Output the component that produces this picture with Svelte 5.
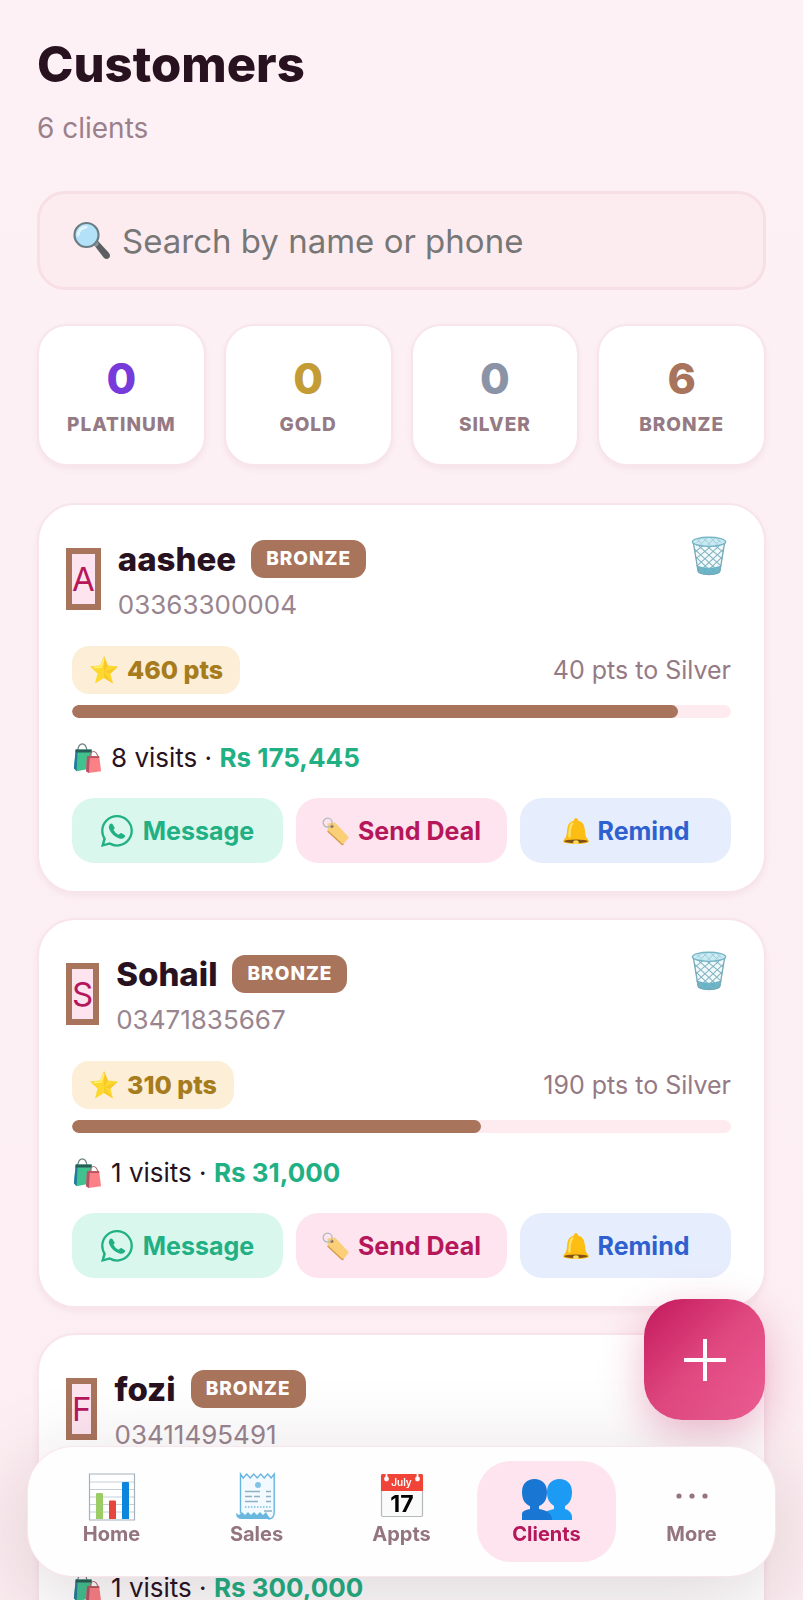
<script>
  const tiers = [
    { name: 'Platinum', count: 0, color: '#773bdc' },
    { name: 'Gold', count: 0, color: '#c39c35' },
    { name: 'Silver', count: 0, color: '#8a94a6' },
    { name: 'Bronze', count: 6, color: '#a9745c' }
  ];

  const goal = 500;
  const customers = [
    { name: 'aashee', phone: '03363300004', points: 460, visits: 8, spent: 175445 },
    { name: 'Sohail', phone: '03471835667', points: 310, visits: 1, spent: 31000 },
    { name: 'fozi', phone: '03411495491', points: 300, visits: 1, spent: 300000 }
  ];

  const tabs = ['Home', 'Sales', 'Appts', 'Clients', 'More'];
  let active = $state('Clients');
  let query = $state('');

  let shown = $derived(
    customers.filter((c) => (c.name + c.phone).toLowerCase().includes(query.toLowerCase()))
  );
</script>

{#snippet icon(name)}
  {#if name === 'Home'}
    <svg class="tab-icon" viewBox="0 0 48 48" aria-hidden="true">
      <path d="M1.500 1H46.500V47H1.500Z" fill="#fff" />
      <path d="M2 9H46M2 16.500H46M2 24H46M2 31.500H46M2 39H46" stroke="#c3ced6" stroke-width="1" />
      <path d="M1.500 1H46.500V47H1.500Z" fill="none" stroke="#a3b2bc" stroke-width="1.200" />
      <path d="M8 46V21q0-1 1-1h5q1 0 1 1V46Z" fill="#9ccc65" />
      <path d="M21 46V28.500q0-1 1-1h5q1 0 1 1V46Z" fill="#e8453c" />
      <path d="M34 46V10q0-1 1-1h5q1 0 1 1V46Z" fill="#0b86dc" />
    </svg>
  {:else if name === 'Sales'}
    <svg class="tab-icon" viewBox="0 0 48 48" aria-hidden="true">
      <path d="M7 1l3 4 3-4 3 4 3-4 3 4 3-4 3 4 3-4 3 4 3-4 3 4 3-4V40q0 6-6 6H10L7 40Z" fill="#f2faff" />
      <path d="M7.500 40V1l2.700 4 3.500-4 3.500 4 3.500-4 3.500 4 3.500-4 3.500 4 3.500-4 3.500 4 3-4V39q0 7-6 7" fill="none" stroke="#67b5de" stroke-width="1.400" />
      <path d="M3 40l3 2 3-3 3 3 3-3 3 3 3-3 3 3 3-3 3 3 3-3q2 5 5 7H9q-6 0-6-6Z" fill="#69b6df" />
      <circle cx="25" cy="12" r="3" fill="#82c3e5" />
      <path d="M12 18.500H27M33 18.500H38M12 23.500H19M21 23.500H27M33 23.500H38M12 28.500H25M33 28.500H38M31 38H39" stroke="#8fb0c1" stroke-width="1.500" />
      <path d="M12 34H39" stroke="#79bce0" stroke-width="1.500" stroke-dasharray="1.500 1.500" />
    </svg>
  {:else if name === 'Appts'}
    <svg class="tab-icon" viewBox="0 0 48 48" aria-hidden="true">
      <rect x="3.500" y="1.500" width="41" height="42" rx="1.500" fill="#fafafa" stroke="#b5babd" stroke-width="1.200" />
      <path d="M3 18V2.500Q3 1 4.500 1h39Q45 1 45 2.500V18Z" fill="#f04438" />
      <path d="M8.500 0v5M39.500 0v5" stroke="#fff" stroke-width="1.800" />
      <circle cx="8.500" cy="6" r="2.400" fill="#fff" />
      <circle cx="39.500" cy="6" r="2.400" fill="#fff" />
      <text x="23.500" y="13" text-anchor="middle" font-size="10" font-weight="600" fill="#fff">July</text>
      <text x="24" y="38.500" text-anchor="middle" font-size="23" font-weight="700" fill="#000">17</text>
    </svg>
  {:else if name === 'Clients'}
    <svg class="tab-icon wide" viewBox="0 0 52 48" aria-hidden="true">
      <path d="M38.500 6C46 6 51 11 51 19c0 8-3 12-7 14v3c4 1 7 4 7 8v3H26V38l7-2v-3c-4-3-7-6-7-14 0-8 5-13 12.500-13Z" fill="#1c9bf5" />
      <path d="M13.500 6C21 6 26 11 26 19c0 8-3 12-8 14v3c7 1 13 4 13 11H1v-6c0-2 2-4 8-5v-3C4 31 1 27 1 19 1 11 6 6 13.500 6Z" fill="#1976d2" />
    </svg>
  {:else}
    <svg class="tab-icon" viewBox="0 0 48 48" aria-hidden="true" fill="#93747f">
      <circle cx="11" cy="23" r="2.600" /><circle cx="24" cy="23" r="2.600" /><circle cx="37" cy="23" r="2.600" />
    </svg>
  {/if}
{/snippet}

<div class="screen">
  <main>
    <h1>Customers</h1>
    <p class="sub">6 clients</p>

    <label class="search">
      <svg viewBox="0 0 40 40" aria-label="Search">
        <path d="M22 24l4-4 11 12q2 3 0 5t-5 0Z" fill="#5b5f61" />
        <path d="M20 22l4-3 3 4-3 3Z" fill="#8e989d" />
        <circle cx="14.500" cy="14" r="12" fill="#b3e1f7" stroke="#6c7c84" stroke-width="2.200" />
        <path d="M6 14q1-7 8-8" fill="none" stroke="#e2f5fe" stroke-width="3" stroke-linecap="round" />
      </svg>
      <input type="search" placeholder="Search by name or phone" bind:value={query} />
    </label>

    <section class="tiers">
      {#each tiers as tier}
        <div class="tier">
          <strong style:color={tier.color}>{tier.count}</strong>
          <span>{tier.name}</span>
        </div>
      {/each}
    </section>

    <section class="list">
      {#each shown as c}
        <article>
          <header>
            <span class="avatar">{c.name[0].toUpperCase()}</span>
            <div class="who">
              <div class="name"><h2>{c.name}</h2><span class="badge">BRONZE</span></div>
              <p>{c.phone}</p>
            </div>
            <button class="trash" aria-label="Delete {c.name}">
              <svg viewBox="0 0 38 42" aria-hidden="true">
                <path d="M2 6l5 31q1 4 12 4t12-4L36 6Z" fill="#f1f9fb" />
                <path d="M6 31q13 5 26 0l-1 6q-2 4-12 4T7 37Z" fill="#62b5c9" />
                <path d="M4 17L14 9M5 24L22 10M7 31L30 10M8 38L34 14M15 39L33 22M24 39L32 31M34 17L24 9M33 24L16 10M31 31L8 10M30 38L4 14M23 39L5 22M14 39L6 31" stroke="#82b3c1" stroke-width="1.100" />
                <path d="M2.500 7l5 30q1 3.500 11.500 3.500T30.500 37l5-30" fill="none" stroke="#78a9b7" stroke-width="1.400" />
                <ellipse cx="19" cy="6" rx="17.500" ry="4.800" fill="#c9eaf2" stroke="#75b5c6" stroke-width="1.500" />
                <path d="M7 4l5 5M13 2l8 8M21 2l7 7M28 3l4 4M31 4l-5 5M25 2l-8 8M17 2l-7 7M10 3L6 7" stroke="#9ccad5" stroke-width="1" />
              </svg>
            </button>
          </header>

          <div class="points">
            <span class="pill">
              <svg viewBox="0 0 30 30" aria-hidden="true">
                <path d="M15 1l4 9.500 10 1-7.500 7L24 28.500 15 23l-9 5.500 2.500-10L1 11.500l10-1Z" fill="#fdd82f" />
                <path d="M15 1l4 9.500L15 17ZM29 11.500L21.500 18.500 15 17ZM24 28.500L15 23v-6Z" fill="#f5bd27" opacity=".55" />
                <path d="M15 4l-3 8-7 .5" fill="none" stroke="#fff37a" stroke-width="1.500" />
              </svg>
              {c.points} pts
            </span>
            <span class="togo">{goal - c.points} pts to Silver</span>
          </div>
          <div class="bar"><div style:width="{(c.points / goal) * 100}%"></div></div>

          <p class="visits">
            <svg viewBox="0 0 32 32" aria-hidden="true">
              <path d="M6 8Q7 1 11 1t5 7" fill="none" stroke="#6f7f80" stroke-width="1.300" />
              <path d="M4 7h17v20L5 30 2 27Z" fill="#3fc28e" />
              <path d="M4 7L2 27l3 3 1-23Z" fill="#2679a0" />
              <path d="M4 7h17v3H3.700Z" fill="#275d55" />
              <path d="M19 15q1-6 4-6t5 6" fill="none" stroke="#a76c70" stroke-width="1.200" />
              <path d="M16 14h13l2 16-13 2-3-2Z" fill="#fb8186" />
              <path d="M16 14l-1 16 3 2 1-18Z" fill="#b05268" />
              <path d="M16 14h13v2H16Z" fill="#b6545e" />
            </svg>
            <span>{c.visits} visits · <b>Rs {c.spent.toLocaleString('en-US')}</b></span>
          </p>

          <div class="actions">
            <button class="message">
              <svg class="wa" viewBox="0 0 16 16" aria-hidden="true" fill="currentColor">
                <path d="M13.601 2.326A7.850 7.850 0 0 0 7.994 0C3.627 0 .068 3.558.064 7.926c0 1.399.366 2.760 1.057 3.965L0 16l4.204-1.102a7.900 7.900 0 0 0 3.790.965h.004c4.368 0 7.926-3.558 7.930-7.930A7.900 7.900 0 0 0 13.600 2.326zM7.994 14.721a6.800 6.800 0 0 1-3.356-.920l-.240-.144-2.694.754.766-2.533-.156-.251a6.760 6.760 0 0 1-1.107-3.705c0-3.726 3.057-6.784 6.791-6.784a6.760 6.760 0 0 1 6.788 6.791c-.004 3.739-3.061 6.792-6.792 6.792" />
                <path d="M4.300 4.700Q5 3.800 5.700 4.500L6.800 6.200Q7 6.700 6.200 7.400 6.900 8.900 8.800 9.900L9.700 9.100Q10 8.900 10.400 9.100L11.900 10.100Q12.300 10.600 11.800 11.100 10.800 12.200 9.200 11.700 5.400 10.400 4.100 7 3.700 5.700 4.300 4.700Z" />
              </svg>
              Message
            </button>
            <button class="deal">
              <svg viewBox="0 0 30 30" aria-hidden="true">
                <path d="M6 7l8-1 14 15q1 1 0 2l-5 6q-1 1-2 0L6 15Z" fill="#fbcf78" />
                <path d="M6 15l15 14q1 1 2 0" fill="none" stroke="#d69c4a" stroke-width="1.500" />
                <circle cx="10.500" cy="10" r="1.800" fill="#8e7352" />
                <circle cx="6" cy="6" r="4.800" fill="none" stroke="#b2bac0" stroke-width="1.400" />
              </svg>
              Send Deal
            </button>
            <button class="remind">
              <svg viewBox="0 0 30 30" aria-hidden="true">
                <path d="M15 1q2 0 2.500 3c5 1 6.500 5 7 10 .5 6 1 8 4 11q1 2-1 2.500-12 3-25 0-2-.5-1-2.500c3-3 3.500-5 4-11 .5-5 2-9 7-10Q13 1 15 1Z" fill="#fdbd13" />
                <path d="M11 7q-3 3-3 14" fill="none" stroke="#ffe36b" stroke-width="2.500" stroke-linecap="round" />
                <ellipse cx="15" cy="26" rx="12.500" ry="2" fill="#825014" />
                <ellipse cx="15" cy="27" rx="3" ry="2" fill="#ffe05c" />
              </svg>
              Remind
            </button>
          </div>
        </article>
      {/each}
    </section>
  </main>

  <button class="fab" aria-label="Add customer">
    <svg viewBox="0 0 42 42" aria-hidden="true"><path d="M21 0V42M0 21H42" stroke="#fff" stroke-width="4" /></svg>
  </button>

  <nav>
    {#each tabs as tab}
      <button class:active={active === tab} onclick={() => (active = tab)}>
        {@render icon(tab)}
        <span>{tab}</span>
      </button>
    {/each}
  </nav>
</div>

<style>
  :global(body) { margin: 0; background: #fdf0f5; }
  * { box-sizing: border-box; }
  .screen {
    height: 100vh;
    overflow-y: auto;
    scrollbar-width: none;
    background: linear-gradient(#fdf1f6, #fceef2);
    color: #28121f;
    font-family: Inter, "Liberation Sans", sans-serif;
  }
  main { padding: 35px 37px 190px; }
  h1, h2, p { margin: 0; }
  button { border: 0; padding: 0; background: none; font: inherit; color: inherit; cursor: pointer; }
  svg { display: block; flex: none; overflow: visible; }

  h1 { font-size: 49px; line-height: 60px; font-weight: 800; }
  .sub { margin-top: 15px; font-size: 28px; line-height: 36px; color: #9a808a; }

  .search {
    display: flex;
    align-items: center;
    gap: 10px;
    height: 99px;
    margin-top: 45px;
    padding: 0 32px;
    border: 3px solid #f8dfe5;
    border-radius: 28px;
    background: #fdecef;
  }
  .search svg { width: 40px; height: 40px; }
  .search input {
    flex: 1;
    min-width: 0;
    border: 0;
    padding: 0;
    outline: 0;
    background: none;
    appearance: none;
    font: 400 33px/42px Inter, "Liberation Sans", sans-serif;
    color: #28121f;
  }
  .search input::placeholder { color: #777; opacity: 1; }

  .tiers { display: grid; grid-template-columns: repeat(4, 1fr); gap: 18px; margin-top: 34px; }
  .tier {
    display: flex;
    flex-direction: column;
    align-items: center;
    gap: 9px;
    padding: 26px 0 27px;
    border: 2px solid #f8e5eb;
    border-radius: 30px;
    background: #fff;
    box-shadow: 0 3px 6px rgba(120, 40, 70, .06);
  }
  .tier strong { font-size: 43px; line-height: 52px; font-weight: 800; }
  .tier span { font-size: 19px; line-height: 24px; font-weight: 800; letter-spacing: 1px; text-transform: uppercase; color: #957a84; }

  .list { display: grid; gap: 25px; margin-top: 37px; }
  article {
    padding: 31px 33px 28px;
    border: 2px solid #f8e5eb;
    border-radius: 38px;
    background: #fff;
    box-shadow: 0 3px 6px rgba(120, 40, 70, .06);
  }
  header { display: flex; align-items: center; gap: 23px; }
  .avatar {
    background: #fde4ef;
    box-shadow: 0 0 0 6px #a9745c;
    color: #b5175a;
    font-size: 33px;
    line-height: 50px;
  }
  .who { flex: 1; min-width: 0; padding-top: 3px; }
  .name { display: flex; align-items: center; gap: 15px; }
  h2 { font-size: 33px; line-height: 40px; font-weight: 800; }
  .badge {
    padding: 7px 15px;
    border-radius: 13px;
    background: #a9745c;
    color: #fff;
    font-size: 19px;
    line-height: 24px;
    font-weight: 800;
    letter-spacing: 1px;
  }
  .who p { margin-top: 10px; font-size: 26px; line-height: 32px; color: #99858f; }
  .trash { align-self: flex-start; margin-right: 4px; }
  .trash svg { width: 36px; height: 40px; }

  .points { display: flex; align-items: center; justify-content: space-between; margin-top: 25px; font-size: 25px; line-height: 32px; }
  .pill {
    display: flex;
    align-items: center;
    gap: 8px;
    padding: 8px 17px;
    border-radius: 17px;
    background: #fdeed8;
    color: #a67c1d;
    font-weight: 800;
  }
  .pill svg { width: 30px; height: 30px; }
  .togo { color: #957a84; }
  .bar { height: 13px; margin-top: 11px; border-radius: 7px; background: #fdebef; overflow: hidden; }
  .bar div { height: 100%; border-radius: 7px; background: #a9745c; }

  .visits { display: flex; align-items: center; gap: 9px; margin-top: 24px; font-size: 26px; line-height: 32px; }
  .visits svg { width: 30px; height: 30px; }
  .visits b { color: #20b083; font-weight: 700; }

  .actions { display: grid; grid-template-columns: repeat(3, 1fr); gap: 13px; margin-top: 24px; }
  .actions button {
    display: flex;
    align-items: center;
    justify-content: center;
    gap: 8px;
    height: 65px;
    border-radius: 22px;
    font-size: 25px;
    line-height: 32px;
    font-weight: 700;
    white-space: nowrap;
  }
  .actions svg { width: 28px; height: 28px; }
  .actions .wa { width: 32px; height: 32px; }
  .actions .message { background: #d9f7ec; color: #20b083; gap: 10px; }
  .actions .deal { background: #fde4ef; color: #b5175a; }
  .actions .remind { background: #e6edfd; color: #2e60d0; }

  .fab {
    position: fixed;
    right: 38px;
    bottom: 180px;
    display: grid;
    place-items: center;
    width: 121px;
    height: 121px;
    border-radius: 38px;
    background: linear-gradient(135deg, #c2185b, #e04880 50%, #ec5e94);
    box-shadow: 0 14px 44px rgba(194, 24, 91, .3);
  }
  .fab svg { width: 42px; height: 42px; }

  nav {
    position: fixed;
    left: 28px;
    right: 28px;
    bottom: 24px;
    display: grid;
    grid-template-columns: repeat(5, 1fr);
    gap: 6px;
    padding: 14px;
    border-radius: 45px;
    background: #fffefe;
    box-shadow: 0 0 0 1px #f9e5ec, 0 20px 90px rgba(60, 20, 40, .18);
  }
  nav button {
    display: flex;
    flex-direction: column;
    align-items: center;
    gap: 1px;
    padding: 12px 0 16px;
    border-radius: 34px;
    color: #93747f;
    font-size: 20px;
    line-height: 24px;
    font-weight: 700;
  }
  nav .active { background: #fde4ef; color: #b5175a; }
  .tab-icon { width: 48px; height: 48px; }
  .tab-icon.wide { width: 52px; }
</style>
